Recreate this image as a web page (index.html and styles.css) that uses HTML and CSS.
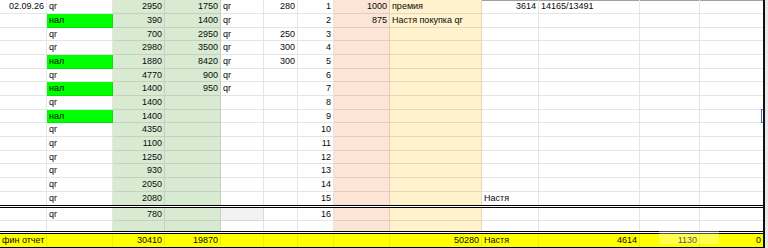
FILE: index.html
```html
<!DOCTYPE html>
<html>
<head>
<meta charset="utf-8">
<link rel="stylesheet" href="styles.css">
</head>
<body>
<div class="sheet">
  <div class="row h14"><div class="c r">02.09.26</div><div class="c">qr</div><div class="c g r">2950</div><div class="c g r">1750</div><div class="c">qr</div><div class="c r">280</div><div class="c r">1</div><div class="c o r">1000</div><div class="c y">премия</div><div class="c r top">3614</div><div class="c top">14165/13491</div><div class="c top"></div><div class="c top"></div></div>
  <div class="row h14"><div class="c"></div><div class="c lime">нал</div><div class="c g r">390</div><div class="c g r">1400</div><div class="c">qr</div><div class="c"></div><div class="c r">2</div><div class="c o r">875</div><div class="c y">Настя покупка qr</div><div class="c"></div><div class="c"></div><div class="c"></div><div class="c"></div></div>
  <div class="row h13"><div class="c"></div><div class="c">qr</div><div class="c g r">700</div><div class="c g r">2950</div><div class="c">qr</div><div class="c r">250</div><div class="c r">3</div><div class="c o"></div><div class="c y"></div><div class="c"></div><div class="c"></div><div class="c"></div><div class="c"></div></div>
  <div class="row h14"><div class="c"></div><div class="c">qr</div><div class="c g r">2980</div><div class="c g r">3500</div><div class="c">qr</div><div class="c r">300</div><div class="c r">4</div><div class="c o"></div><div class="c y"></div><div class="c"></div><div class="c"></div><div class="c"></div><div class="c"></div></div>
  <div class="row h14"><div class="c"></div><div class="c lime">нал</div><div class="c g r">1880</div><div class="c g r">8420</div><div class="c">qr</div><div class="c r">300</div><div class="c r">5</div><div class="c o"></div><div class="c y"></div><div class="c"></div><div class="c"></div><div class="c"></div><div class="c"></div></div>
  <div class="row h13"><div class="c"></div><div class="c">qr</div><div class="c g r">4770</div><div class="c g r">900</div><div class="c">qr</div><div class="c"></div><div class="c r">6</div><div class="c o"></div><div class="c y"></div><div class="c"></div><div class="c"></div><div class="c"></div><div class="c"></div></div>
  <div class="row h14"><div class="c"></div><div class="c lime">нал</div><div class="c g r">1400</div><div class="c g r">950</div><div class="c">qr</div><div class="c"></div><div class="c r">7</div><div class="c o"></div><div class="c y"></div><div class="c"></div><div class="c"></div><div class="c"></div><div class="c"></div></div>
  <div class="row h14"><div class="c"></div><div class="c">qr</div><div class="c g r">1400</div><div class="c g"></div><div class="c"></div><div class="c"></div><div class="c r">8</div><div class="c o"></div><div class="c y"></div><div class="c"></div><div class="c"></div><div class="c"></div><div class="c"></div></div>
  <div class="row h13"><div class="c"></div><div class="c lime">нал</div><div class="c g r">1400</div><div class="c g"></div><div class="c"></div><div class="c"></div><div class="c r">9</div><div class="c o"></div><div class="c y"></div><div class="c"></div><div class="c"></div><div class="c"></div><div class="c"></div></div>
  <div class="row h14"><div class="c"></div><div class="c">qr</div><div class="c g r">4350</div><div class="c g"></div><div class="c"></div><div class="c"></div><div class="c r">10</div><div class="c o"></div><div class="c y"></div><div class="c"></div><div class="c"></div><div class="c"></div><div class="c"></div></div>
  <div class="row h14"><div class="c"></div><div class="c">qr</div><div class="c g r">1100</div><div class="c g"></div><div class="c"></div><div class="c"></div><div class="c r">11</div><div class="c o"></div><div class="c y"></div><div class="c"></div><div class="c"></div><div class="c"></div><div class="c"></div></div>
  <div class="row h13"><div class="c"></div><div class="c">qr</div><div class="c g r">1250</div><div class="c g"></div><div class="c"></div><div class="c"></div><div class="c r">12</div><div class="c o"></div><div class="c y"></div><div class="c"></div><div class="c"></div><div class="c"></div><div class="c"></div></div>
  <div class="row h14"><div class="c"></div><div class="c">qr</div><div class="c g r">930</div><div class="c g"></div><div class="c"></div><div class="c"></div><div class="c r">13</div><div class="c o"></div><div class="c y"></div><div class="c"></div><div class="c"></div><div class="c"></div><div class="c"></div></div>
  <div class="row h14"><div class="c"></div><div class="c">qr</div><div class="c g r">2050</div><div class="c g"></div><div class="c"></div><div class="c"></div><div class="c r">14</div><div class="c o"></div><div class="c y"></div><div class="c"></div><div class="c"></div><div class="c"></div><div class="c"></div></div>
  <div class="row h13 dbl"><div class="c"></div><div class="c">qr</div><div class="c g r">2080</div><div class="c g"></div><div class="c"></div><div class="c"></div><div class="c r">15</div><div class="c o"></div><div class="c y"></div><div class="c">Настя</div><div class="c"></div><div class="c"></div><div class="c"></div></div>
  <div class="row h13"><div class="c"></div><div class="c">qr</div><div class="c g r">780</div><div class="c g"></div><div class="c grey"></div><div class="c"></div><div class="c r">16</div><div class="c o"></div><div class="c y"></div><div class="c"></div><div class="c"></div><div class="c"></div><div class="c"></div></div>
  <div class="row h10 dbl"><div class="c"></div><div class="c"></div><div class="c g"></div><div class="c g"></div><div class="c"></div><div class="c"></div><div class="c"></div><div class="c o"></div><div class="c y"></div><div class="c"></div><div class="c"></div><div class="c"></div><div class="c"></div></div>
  <div class="row h13 total"><div class="c">фин отчет</div><div class="c"></div><div class="c r">30410</div><div class="c r">19870</div><div class="c"></div><div class="c"></div><div class="c"></div><div class="c"></div><div class="c r">50280</div><div class="c">Настя</div><div class="c r">4614</div><div class="c r">1130</div><div class="c r">0</div></div>
  <div class="sel"></div>
  <div class="toast"></div>
</div>
</body>
</html>
```
FILE: styles.css
```css
* { box-sizing: border-box; }
html, body { margin: 0; padding: 0; }
body {
  background: #e9e9e9;
  font-family: "Liberation Sans", Arial, sans-serif;
  font-size: 9px;
  color: #0a0a0a;
  width: 768px;
  height: 248px;
  overflow: hidden;
}
.sheet {
  position: relative;
  width: 765px;
  background: #fff;
  border-right: 2px solid #111;
}
.row {
  display: grid;
  grid-template-columns: 47px 66px 52px 56px 43px 34px 36px 56px 92px 57px 101px 60px 63px;
}
.row.h14 { height: 14px; }
.row.h13 { height: 13px; }
.row.h10 { height: 10px; }
.row.dbl { border-bottom: 3px double #000; box-sizing: content-box; }
.row.total { background: #ffff00; border-bottom: 1px solid #000; box-sizing: content-box; }
.c {
  border-right: 1px solid rgba(0, 0, 0, 0.1);
  border-bottom: 1px solid rgba(0, 0, 0, 0.1);
  padding: 0 2px;
  line-height: 12px;
  white-space: nowrap;
  overflow: visible;
}
.row.dbl .c, .row.total .c { border-bottom: 0; }
.row.total .c { border-right-color: rgba(0, 0, 0, 0.07); }
.row .c:last-child { border-right: 0; }
.r { text-align: right; }
.g { background: #d9ead3; }
.o { background: #fce4d6; }
.y { background: #fff2cc; }
.lime { background: #00ff00; }
.grey { background: #f2f2f2; }
.top { box-shadow: inset 0 1px 0 #a0a0a0; }
.sel {
  position: absolute;
  left: 761px;
  top: 109px;
  width: 2px;
  height: 14px;
  border: 1px solid #3a78d8;
  border-right: 0;
}
.toast {
  position: absolute;
  left: 659px;
  top: 228px;
  width: 60px;
  height: 16px;
  border-radius: 3px;
  background: rgba(255, 255, 255, 0.3);
}
```
